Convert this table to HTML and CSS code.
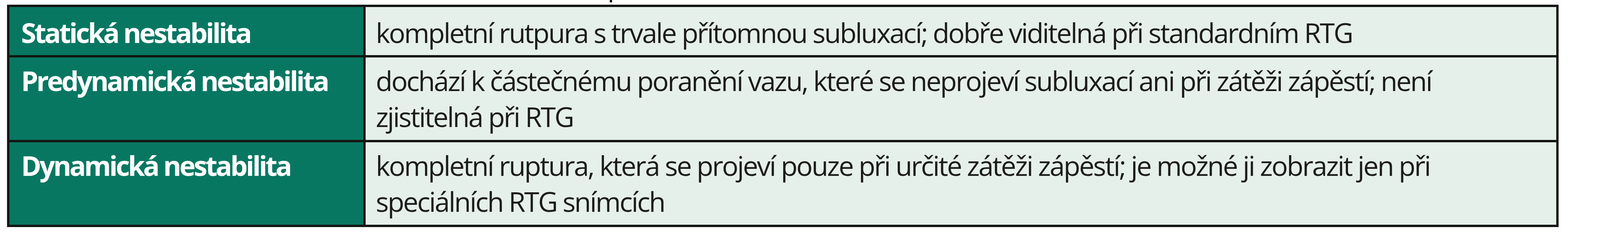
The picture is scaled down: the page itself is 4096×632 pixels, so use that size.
FILE: index.html
```html
<!DOCTYPE html>
<html lang="cs">
<head>
<meta charset="utf-8">
<link rel="stylesheet" href="styles.css">
</head>
<body>
<div class="page">
  <div class="tick"></div>
  <div class="table">
    <div class="head first">Statická nestabilita</div>
    <div class="desc first">kompletní rutpura s trvale přítomnou subluxací; dobře viditelná při standardním RTG</div>
    <div class="head">Predynamická nestabilita</div>
    <div class="desc">dochází k částečnému poranění vazu, které se neprojeví subluxací ani při zátěži zápěstí; není<br>zjistitelná při RTG</div>
    <div class="head">Dynamická nestabilita</div>
    <div class="desc">kompletní ruptura, která se projeví pouze při určité zátěži zápěstí; je možné ji zobrazit jen při<br>speciálních RTG snímcích</div>
  </div>
</div>
</body>
</html>
```
FILE: styles.css
```css
html, body {
  margin: 0;
  padding: 0;
  background: #ffffff;
}

.page {
  width: 4096px;
  height: 632px;
  overflow: hidden;
}

.tick {
  width: 6px;
  height: 6px;
  margin-left: 1561px;
  background: #111;
}

.table {
  margin-top: 6px;
  margin-left: 18px;
  width: 3972px;
  box-sizing: border-box;
  display: grid;
  grid-template-columns: 906px minmax(0, 1fr);
  gap: 6px;
  padding: 6px;
  background: #131613;
  font-family: "Open Sans", "DejaVu Sans", sans-serif;
  font-size: 70px;
  line-height: 92px;
}

.head {
  background: #087762;
  color: #ffffff;
  font-weight: 700;
  font-stretch: 100%;
  letter-spacing: -4.6px;
  padding: 13px 20px 14px 30px;
  white-space: nowrap;
}

.desc {
  background: #e6f0eb;
  color: #1c1c1c;
  font-weight: 400;
  font-stretch: 100%;
  letter-spacing: -3.2px;
  padding: 13px 20px 14px 26px;
  white-space: nowrap;
}

.first {
  padding-top: 19px;
  padding-bottom: 12px;
}
```
